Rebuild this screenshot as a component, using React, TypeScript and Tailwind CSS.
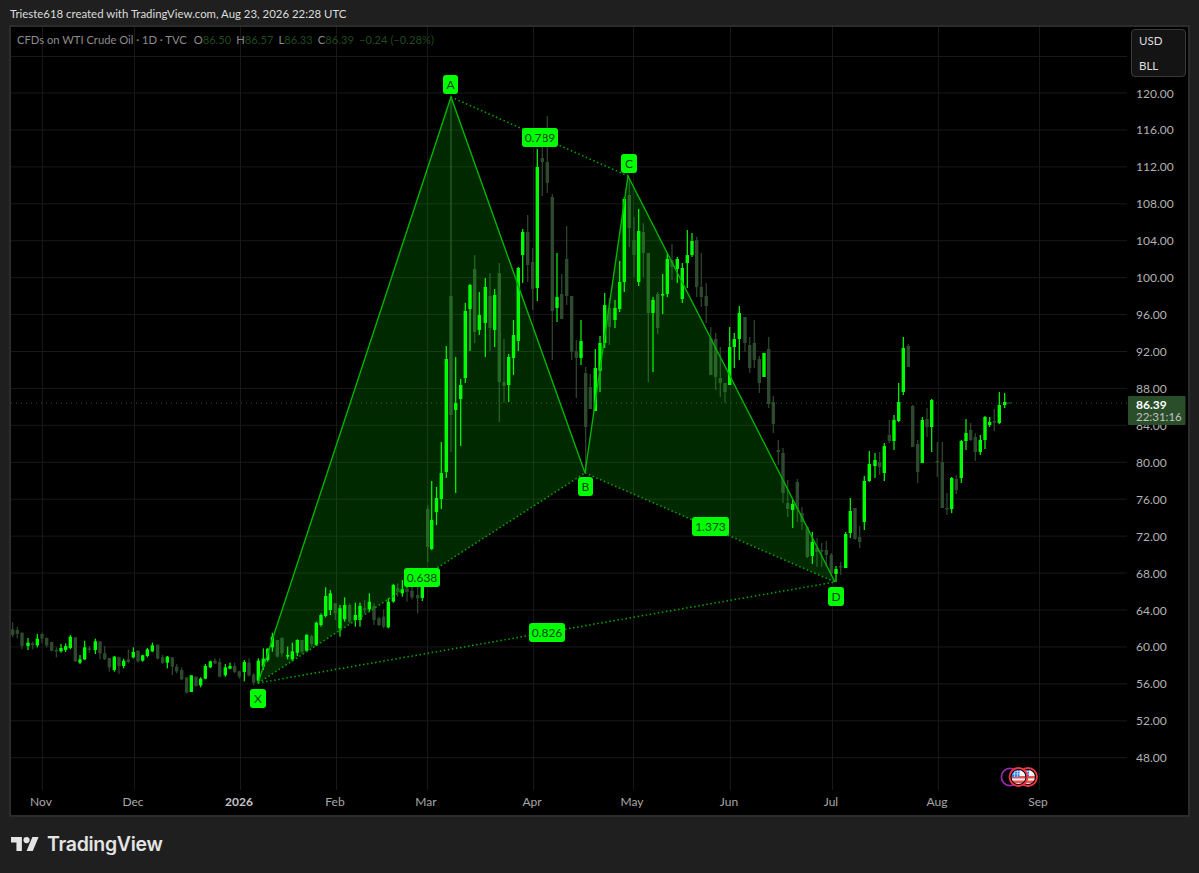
type Candle = [number, number, number, number, number, number];

const PRICE_Y0 = 93;
const PRICE_STEP = 36.93;
const prices = Array.from({ length: 19 }, (_, i) => 120 - i * 4);
const months: [string, number][] = [
  ["Nov", 41],
  ["Dec", 133],
  ["2026", 239],
  ["Feb", 335],
  ["Mar", 426],
  ["Apr", 532],
  ["May", 632],
  ["Jun", 729],
  ["Jul", 831],
  ["Aug", 937],
  ["Sep", 1038],
];

// x, high, body top, body bottom, low, up -- first stretch before the pattern
const early: Candle[] = (
  [
    [38, 187, 208, 225, 232, 0],
    [52, 200, 210, 222, 235, 0],
    [66, 218, 218, 258, 268, 0],
    [84, 234, 248, 258, 270, 1],
    [98, 245, 250, 255, 268, 0],
    [112, 222, 236, 256, 262, 1],
    [126, 218, 222, 236, 250, 0],
    [140, 232, 234, 256, 262, 0],
    [155, 245, 246, 272, 274, 0],
    [169, 262, 270, 272, 292, 0],
    [183, 252, 264, 274, 278, 1],
    [197, 250, 258, 270, 276, 1],
    [211, 225, 230, 264, 268, 1],
    [226, 232, 232, 304, 305, 0],
    [240, 285, 298, 308, 312, 1],
    [254, 242, 262, 298, 300, 1],
    [268, 258, 265, 267, 278, 0],
    [286, 236, 244, 270, 282, 1],
    [300, 244, 244, 280, 298, 0],
    [314, 258, 280, 297, 300, 0],
    [328, 294, 294, 322, 335, 0],
    [343, 288, 290, 330, 335, 1],
    [357, 290, 292, 318, 342, 0],
    [371, 296, 302, 318, 325, 1],
    [385, 268, 298, 306, 310, 0],
    [400, 262, 276, 292, 295, 1],
    [414, 272, 272, 304, 308, 0],
    [428, 284, 286, 302, 305, 1],
    [442, 264, 268, 288, 292, 1],
    [457, 248, 256, 274, 276, 1],
    [473, 254, 254, 296, 298, 0],
    [488, 285, 292, 308, 312, 0],
    [502, 288, 290, 308, 325, 1],
    [517, 292, 292, 320, 345, 0],
    [530, 312, 320, 334, 340, 0],
    [545, 322, 330, 358, 360, 0],
    [560, 352, 352, 398, 400, 0],
    [574, 345, 346, 396, 396, 1],
    [588, 350, 350, 378, 380, 0],
    [602, 352, 356, 376, 382, 1],
    [616, 312, 318, 356, 358, 1],
    [631, 302, 304, 322, 324, 1],
    [645, 295, 302, 310, 312, 0],
    [659, 295, 306, 350, 352, 0],
    [676, 312, 322, 346, 350, 1],
    [690, 308, 318, 326, 328, 1],
    [704, 308, 318, 336, 340, 0],
    [718, 332, 334, 350, 356, 0],
    [733, 300, 306, 336, 364, 1],
    [747, 295, 308, 346, 350, 0],
    [761, 340, 344, 368, 376, 0],
    [775, 295, 302, 362, 372, 1],
    [790, 265, 296, 320, 330, 1],
    [803, 265, 266, 300, 305, 1],
    [817, 218, 230, 262, 275, 1],
    [832, 240, 240, 290, 292, 0],
    [846, 232, 234, 280, 290, 0],
    [863, 260, 285, 290, 298, 1],
    [877, 248, 274, 298, 304, 1],
    [892, 238, 240, 278, 288, 1],
    [906, 240, 240, 275, 280, 0],
    [920, 224, 224, 272, 272, 1],
    [935, 224, 228, 252, 260, 0],
    [949, 185, 188, 255, 258, 1],
    [963, 160, 165, 195, 200, 1],
    [977, 82, 108, 168, 172, 1],
    [991, 90, 100, 150, 165, 1],
    [1006, 130, 130, 160, 180, 0],
    [1020, 135, 145, 205, 230, 1],
    [1034, 112, 135, 178, 185, 1],
    [1049, 130, 135, 185, 190, 0],
    [1066, 128, 165, 180, 200, 1],
    [1080, 128, 138, 180, 200, 1],
    [1094, 120, 145, 150, 160, 0],
    [1108, 100, 125, 148, 155, 1],
    [1122, 130, 138, 180, 195, 0],
    [1137, 170, 175, 195, 198, 0],
    [1151, 148, 170, 200, 205, 0],
    [1165, 115, 125, 202, 205, 1],
    [1180, 72, 75, 125, 128, 1],
    [1193, 70, 85, 95, 110, 0],
    [1207, 60, 88, 100, 110, 1],
    [1221, 62, 85, 96, 125, 0],
    [1236, 80, 92, 112, 118, 0],
    [1253, 70, 105, 115, 160, 0],
  ] as Candle[]
).map(([x, h, t, b, l, u]) => [x / 3, 560 + h / 3, 560 + t / 3, 560 + b / 3, 560 + l / 3, u]);

const late: Candle[] = [
  [422.3, 577, 587, 598, 601, 1],
  [427.7, 505, 509, 547, 562, 0],
  [431.7, 481, 520, 549, 550, 1],
  [436.5, 487, 498, 512, 525, 1],
  [441.3, 442, 473, 499, 509, 1],
  [446.3, 346, 359, 472, 478, 1],
  [451, 97, 296, 415, 452, 0],
  [455.7, 357, 403, 410, 493, 1],
  [460.7, 379, 385, 399, 446, 1],
  [465.3, 303, 311, 378, 383, 1],
  [470, 284, 285, 309, 351, 1],
  [474.7, 255, 269, 332, 343, 0],
  [479.3, 292, 315, 330, 335, 1],
  [485.3, 278, 287, 323, 357, 1],
  [490, 273, 296, 328, 351, 0],
  [494.7, 289, 295, 330, 347, 1],
  [499.3, 263, 273, 382, 422, 0],
  [504, 339, 382, 386, 403, 0],
  [508.7, 354, 357, 385, 402, 1],
  [513.5, 320, 335, 358, 375, 1],
  [518.3, 267, 268, 341, 351, 1],
  [522.7, 229, 232, 255, 283, 1],
  [527.7, 215, 232, 265, 282, 0],
  [532.7, 248, 262, 289, 310, 0],
  [537.3, 149, 167, 288, 301, 1],
  [542.3, 140, 158, 162, 196, 0],
  [547.3, 116, 162, 183, 193, 0],
  [552.3, 194, 197, 311, 360, 0],
  [557, 253, 297, 308, 322, 1],
  [561.7, 274, 294, 319, 319, 0],
  [566.7, 226, 259, 296, 305, 0],
  [571.7, 296, 296, 352, 360, 0],
  [576.3, 340, 351, 358, 398, 0],
  [581, 320, 341, 358, 365, 1],
  [585.7, 367, 373, 427, 472, 0],
  [590.3, 374, 387, 409, 409, 0],
  [595.3, 349, 368, 411, 411, 1],
  [600, 336, 343, 371, 392, 1],
  [604.7, 293, 305, 343, 348, 1],
  [609.3, 298, 308, 327, 345, 0],
  [615, 300, 308, 320, 328, 1],
  [619.7, 261, 282, 309, 312, 1],
  [624.3, 197, 199, 282, 292, 1],
  [629.3, 180, 195, 228, 247, 0],
  [634, 217, 240, 255, 277, 0],
  [638.7, 209, 231, 282, 286, 1],
  [643.3, 223, 232, 253, 277, 0],
  [648.3, 253, 253, 313, 382, 0],
  [653, 297, 300, 313, 372, 1],
  [657.7, 292, 294, 328, 334, 0],
  [662.7, 274, 294, 295, 314, 1],
  [667.3, 253, 259, 294, 297, 1],
  [672, 244, 260, 267, 280, 0],
  [677.3, 257, 259, 269, 283, 1],
  [682.3, 263, 268, 299, 303, 1],
  [687.3, 230, 255, 263, 288, 1],
  [692, 233, 241, 255, 257, 1],
  [696.7, 237, 240, 287, 297, 0],
  [701.3, 253, 287, 297, 307, 0],
  [706.2, 283, 296, 306, 323, 0],
  [710.8, 327, 338, 375, 375, 0],
  [715.7, 333, 339, 377, 390, 0],
  [720.3, 347, 378, 383, 397, 0],
  [725, 383, 383, 392, 403, 0],
  [729.7, 327, 347, 385, 385, 1],
  [734.3, 333, 339, 347, 368, 1],
  [739.3, 306, 313, 339, 360, 1],
  [745, 317, 317, 343, 352, 0],
  [749.7, 337, 345, 368, 373, 0],
  [754.3, 320, 343, 360, 368, 0],
  [759.3, 356, 359, 383, 393, 0],
  [764, 353, 353, 377, 377, 1],
  [768.7, 337, 349, 404, 408, 0],
  [773.3, 396, 402, 424, 433, 0],
  [778.3, 440, 450, 452, 465, 0],
  [783, 448, 453, 493, 503, 0],
  [787.7, 480, 503, 509, 517, 0],
  [792.7, 500, 504, 510, 528, 1],
  [797.3, 479, 482, 509, 522, 0],
  [802, 507, 513, 522, 530, 0],
  [807.3, 526, 527, 557, 558, 0],
  [812.3, 532, 542, 556, 564, 1],
  [817, 538, 548, 552, 567, 0],
  [821.7, 543, 550, 551, 567, 0],
  [826.3, 541, 550, 555, 567, 0],
  [831.3, 553, 555, 573, 576, 0],
  [836, 566, 569, 574, 582, 1],
  [840.7, 562, 566, 567, 575, 0],
  [845.7, 532, 534, 568, 568, 1],
  [850.3, 498, 511, 533, 538, 1],
  [855, 508, 508, 539, 540, 0],
  [859.7, 526, 537, 542, 548, 0],
  [864.3, 476, 481, 522, 530, 1],
  [869.3, 451, 464, 481, 482, 1],
  [875, 453, 460, 466, 478, 1],
  [879.7, 452, 462, 467, 475, 0],
  [884.3, 443, 446, 473, 481, 1],
  [889.3, 420, 435, 441, 443, 0],
  [894, 415, 420, 441, 450, 1],
  [898.7, 383, 402, 421, 422, 1],
  [903.3, 337, 348, 392, 395, 1],
  [908.3, 344, 346, 367, 367, 0],
  [912.7, 405, 406, 447, 447, 0],
  [917.7, 440, 444, 472, 483, 0],
  [922.3, 417, 420, 463, 463, 1],
  [927, 408, 419, 427, 437, 0],
  [931.7, 399, 400, 427, 452, 1],
  [937.3, 442, 461, 462, 477, 0],
  [942.3, 442, 462, 508, 508, 0],
  [947, 493, 508, 509, 515, 0],
  [951.7, 477, 478, 509, 513, 1],
  [956.3, 475, 479, 490, 494, 0],
  [961.3, 440, 441, 478, 483, 1],
  [966, 419, 433, 441, 450, 1],
  [970.7, 423, 430, 440, 441, 0],
  [975.3, 433, 437, 452, 461, 0],
  [980.3, 435, 440, 452, 455, 1],
  [985, 416, 417, 440, 449, 1],
  [989.7, 417, 422, 425, 427, 1],
  [994.3, 409, 421, 422, 431, 0],
  [999.3, 392, 405, 423, 424, 1],
  [1004.7, 393, 402, 405, 408, 1],
];

const candles = [...early, ...late];

const tags: [string, number, number, number, number][] = [
  ["A", 443, 75, 15, 19],
  ["B", 578, 477, 15, 19],
  ["C", 621, 154, 16, 19],
  ["D", 828, 587, 16, 19],
  ["X", 250, 689, 16, 19],
  ["0.789", 522, 128, 36, 19],
  ["0.638", 404, 568, 36, 19],
  ["1.373", 692, 517, 37, 19],
  ["0.826", 529, 623, 36, 19],
];

const Flag = ({ cx, id }: { cx: number; id: string }) => (
  <g>
    <clipPath id={id}>
      <circle cx={cx} cy={777} r={7.5} />
    </clipPath>
    <g clipPath={`url(#${id})`}>
      <rect x={cx - 8} y={769} width={16} height={16} fill="#f5f5f5" />
      <rect x={cx - 8} y={776} width={16} height={2.5} fill="#ef5350" />
      <rect x={cx - 8} y={780.5} width={16} height={2.5} fill="#ef5350" />
      <rect x={cx - 8} y={769} width={9} height={8} fill="#2f80ed" />
      <rect x={cx - 8} y={771} width={9} height={0.7} fill="#cfe3ff" />
      <rect x={cx - 8} y={773.5} width={9} height={0.7} fill="#cfe3ff" />
      <rect x={cx - 4.5} y={769} width={0.7} height={8} fill="#cfe3ff" />
      <rect x={cx - 1.5} y={769} width={0.7} height={8} fill="#cfe3ff" />
    </g>
    <circle cx={cx} cy={777} r={7.6} fill="none" stroke="#000" strokeWidth={1.2} />
    <circle cx={cx} cy={777} r={9} fill="none" stroke="#f23645" strokeWidth={1.8} />
  </g>
);

const Chart = () => (
  <svg viewBox="11 27 1177 788" className="block w-full h-full">
    {prices.map((p, i) => (
      <line key={p} x1={11} x2={1127} y1={PRICE_Y0 + i * PRICE_STEP} y2={PRICE_Y0 + i * PRICE_STEP} stroke="#181818" />
    ))}
    <line x1={11} x2={1127} y1={56.5} y2={56.5} stroke="#181818" />
    {months.map(([m, x]) => (
      <line key={m} x1={x + 1.5} x2={x + 1.5} y1={27} y2={790} stroke="#181818" />
    ))}

    <line x1={11} x2={1127} y1={403} y2={403} stroke="#2a5a2a" strokeDasharray="1 4" />

    {candles.map(([x, h, t, b, l, u]) => {
      const c = u ? "#00ff00" : "#2e4a2e";
      return (
        <g key={x}>
          <rect x={x - 0.6} y={h} width={1.2} height={l - h} fill={c} />
          <rect x={x - 1.7} y={t} width={3.4} height={Math.max(b - t, 1.5)} fill={c} />
        </g>
      );
    })}
    <line x1={1007} x2={1012} y1={403} y2={403} stroke="#2c5a2c" />

    <polygon points="258,683 451,97 585,473" fill="#00ff00" fillOpacity={0.16} />
    <polygon points="585,473 628,176 835,582" fill="#00ff00" fillOpacity={0.16} />
    <polyline points="258,683 451,97 585,473 628,176 835,582" fill="none" stroke="#00b300" strokeWidth={1.4} />
    <g stroke="#00a800" strokeWidth={1.5} strokeDasharray="1.5 2.6">
      <line x1={258} y1={683} x2={585} y2={473} />
      <line x1={585} y1={473} x2={835} y2={582} />
      <line x1={451} y1={97} x2={628} y2={176} />
      <line x1={258} y1={683} x2={835} y2={582} />
    </g>

    {tags.map(([label, x, y, w, h]) => (
      <g key={label}>
        <rect x={x} y={y} width={w} height={h} rx={3} fill="#00ff00" />
        <text x={x + w / 2} y={y + 13.5} textAnchor="middle" fontSize={12} fill="#0e4414">
          {label}
        </text>
      </g>
    ))}
    <line x1={542.5} x2={542.5} y1={130} y2={146} stroke="#00ff00" />
    <line x1={422} x2={422} y1={571} y2={578} stroke="#00ff00" />

    {prices.map((p, i) => (
      <text key={p} x={1136} y={PRICE_Y0 + i * PRICE_STEP + 4.5} fontSize={12} fill="#b2b2b2">
        {p}.00
      </text>
    ))}
    {months.map(([m, x]) => (
      <text
        key={m}
        x={x}
        y={806}
        textAnchor="middle"
        fontSize={12}
        fontWeight={m === "2026" ? 700 : 400}
        fill={m === "2026" ? "#c4c4c4" : "#a8a8a8"}
      >
        {m}
      </text>
    ))}

    <rect x={1128} y={396} width={57.5} height={29} rx={1} fill="#2a4d2a" />
    <text x={1136} y={408.5} fontSize={12} fontWeight={700} fill="#ffffff">
      86.39
    </text>
    <text x={1136} y={421} fontSize={11.5} fill="#c2c2c2">
      22:31:16
    </text>

    <circle cx={1010} cy={777} r={8.6} fill="#000" stroke="#9c27b0" strokeWidth={1.7} />
    <Flag cx={1028} id="flag-back" />
    <Flag cx={1018.5} id="flag-front" />
  </svg>
);

const Legend = () => (
  <div className="absolute left-[6px] top-[6px] flex gap-[5px] text-[11.2px] leading-[14px] text-[#8c8c8c]">
    <span className="mr-[2px]">CFDs on WTI Crude Oil · 1D · TVC</span>
    <span>
      O<span className="text-[#1f4a1f]">86.50</span>
    </span>
    <span>
      H<span className="text-[#1f4a1f]">86.57</span>
    </span>
    <span>
      L<span className="text-[#1f4a1f]">86.33</span>
    </span>
    <span>
      C<span className="text-[#1f4a1f]">86.39</span>
    </span>
    <span className="text-[#1f4a1f]">−0.24 (−0.28%)</span>
  </div>
);

const Logo = () => (
  <svg viewBox="0 4 36 18" className="w-[28px] h-[14px] fill-[#e4e4e4]">
    <path d="M14 22H7V11H0V4h14v18zM28 22h-8l7.5-18h8L28 22z" />
    <circle cx="20" cy="8" r="4" />
  </svg>
);

export default function App() {
  return (
    <div className="flex flex-col h-screen w-full bg-[#1f1f1f] overflow-hidden font-['Lato',sans-serif]">
      <div className="h-[25px] shrink-0 pl-[10px] pt-[6px] text-[11.4px] leading-[16px] text-[#dcdcdc]">
        Trieste618 created with TradingView.com, Aug 23, 2026 22:28 UTC
      </div>
      <div className="relative mx-[9px] h-[792px] shrink-0 border-2 border-[#2c2c2c] bg-black">
        <Chart />
        <Legend />
        <div className="absolute right-[2px] top-[2px] flex h-[48px] w-[55px] flex-col justify-between rounded-[4px] border border-[#3a3a3a] bg-[#141414] pb-[3px] pl-[7px] pt-[4px] text-[11.5px] leading-[14px] text-[#dedede]">
          <span>USD</span>
          <span>BLL</span>
        </div>
      </div>
      <div className="flex items-center gap-[8px] pl-[11px] pt-[19px]">
        <Logo />
        <span className="font-['Inter',sans-serif] text-[19.5px] font-semibold leading-[16px] tracking-[-0.3px] text-[#e4e4e4]">
          TradingView
        </span>
      </div>
    </div>
  );
}
